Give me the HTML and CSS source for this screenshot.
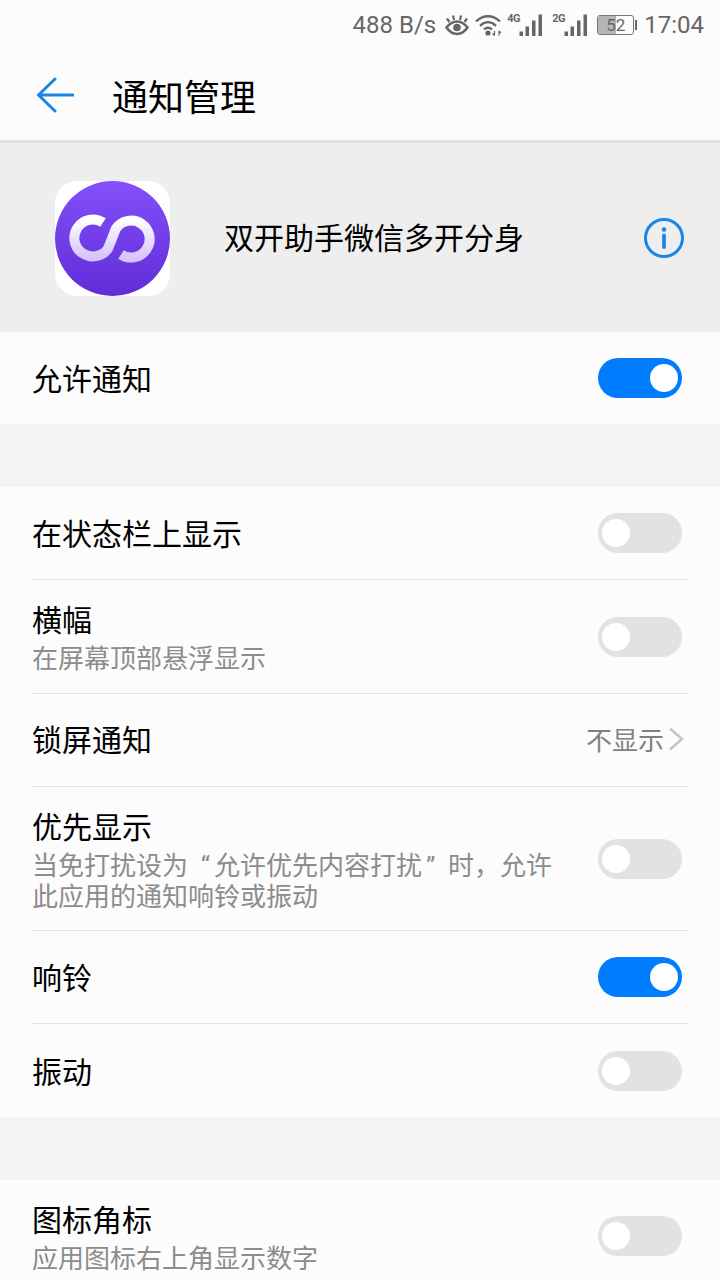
FILE: index.html
```html
<!DOCTYPE html>
<html lang="zh">
<head>
  <title>通知管理</title>
  <meta name="viewport" content="width=device-width, initial-scale=1.0" />
  <link rel="stylesheet" href="styles.css">
</head>
<body>
  <div class="statusbar">
    <span class="speed">488 B/s</span>
    <svg class="ic-eye" width="24" height="22" viewBox="0 0 24 22">
      <path d="M1.500 13.500C5 9 8.500 7.500 12 7.500s7 1.500 10.500 6C19 18.500 15.500 20 12 20s-7-1.500-10.500-6.500z" fill="none" stroke="#666" stroke-width="2.600"/>
      <circle cx="12" cy="13.500" r="3.800" fill="#666"/>
      <path d="M4.500 8L2 4.500M9 6L8 1.500M15 6L16 1.500M19.500 8L22 4.500" stroke="#666" stroke-width="2.200"/>
    </svg>
    <svg class="ic-wifi" width="28" height="22" viewBox="0 0 28 22">
      <path d="M1 7.500C8 0.500 18 0.500 25 7.500M5 11.800C10 7 16 7 21 11.800M9 15.500C11.500 13.300 14.500 13.300 17 15.500" fill="none" stroke="#666" stroke-width="2.300"/>
      <circle cx="13" cy="19" r="2.600" fill="#666"/>
      <path d="M19.500 17v4.500M19.500 21.500l-2-2M24 17v4.500M24 17l2 2" fill="none" stroke="#666" stroke-width="1.200"/>
    </svg>
    <div class="signal">
      <span class="net">4G</span>
      <svg width="24" height="22" viewBox="0 0 24 22"><path d="M0.500 17.500h3.500V22H0.500zM6.500 12.500H10V22H6.500zM13 6.500h3.500V22H13zM19.500 0.500H23V22h-3.500z" fill="#666"/></svg>
    </div>
    <div class="signal">
      <span class="net">2G</span>
      <svg width="24" height="22" viewBox="0 0 24 22"><path d="M0.500 17.500h3.500V22H0.500zM6.500 12.500H10V22H6.500zM13 6.500h3.500V22H13zM19.500 0.500H23V22h-3.500z" fill="#666"/></svg>
    </div>
    <div class="battery">
      <div class="battery-box"><div class="battery-fill"></div><span class="battery-num">52</span></div>
      <div class="battery-cap"></div>
    </div>
    <span class="time">17:04</span>
  </div>

  <div class="titlebar">
    <svg class="back" width="38" height="36" viewBox="0 0 38 36">
      <path d="M19 2L2.500 18L19 34M2.500 18H37" fill="none" stroke="#1a85e6" stroke-width="3" stroke-linecap="round" stroke-linejoin="round"/>
    </svg>
    <h1>通知管理</h1>
  </div>

  <div class="app-head">
    <div class="app-icon">
      <svg width="115" height="115" viewBox="0 0 115 115">
        <defs>
          <linearGradient id="purple" x1="0" y1="0" x2="0" y2="1">
            <stop offset="0" stop-color="#8350fb"/>
            <stop offset="1" stop-color="#5f2cd6"/>
          </linearGradient>
          <linearGradient id="ring" x1="0" y1="0" x2="0" y2="1">
            <stop offset="0" stop-color="#ffffff"/>
            <stop offset="1" stop-color="#d6c4fa"/>
          </linearGradient>
        </defs>
        <circle cx="57.500" cy="57.500" r="57.500" fill="url(#purple)"/>
        <path d="M48 41.500A18.500 18.500 0 1 0 53 67.600L61 47.400A18.500 18.500 0 1 1 66 73.500" fill="none" stroke="url(#ring)" stroke-width="10"/>
      </svg>
    </div>
    <div class="app-name">双开助手微信多开分身</div>
    <svg class="info" width="40" height="40" viewBox="0 0 40 40">
      <circle cx="20" cy="20" r="18.500" fill="none" stroke="#1a85e6" stroke-width="3"/>
      <circle cx="20" cy="11.500" r="2.300" fill="#1a85e6"/>
      <path d="M20 17.500V29" stroke="#1a85e6" stroke-width="3.800" stroke-linecap="round"/>
    </svg>
  </div>

  <div class="group">
    <div class="row row-one last">
      <div class="row-text"><div class="label">允许通知</div></div>
      <div class="toggle on"></div>
    </div>
  </div>

  <div class="group">
    <div class="row row-one">
      <div class="row-text"><div class="label">在状态栏上显示</div></div>
      <div class="toggle"></div>
    </div>
    <div class="row row-two">
      <div class="row-text">
        <div class="label">横幅</div>
        <div class="sub">在屏幕顶部悬浮显示</div>
      </div>
      <div class="toggle"></div>
    </div>
    <div class="row row-one row-lock">
      <div class="row-text"><div class="label">锁屏通知</div></div>
      <div class="value">不显示</div>
      <svg class="chevron" width="16" height="24" viewBox="0 0 16 24">
        <path d="M2 1.500L14 12L2 22.500" fill="none" stroke="#c4c4c4" stroke-width="2.400"/>
      </svg>
    </div>
    <div class="row row-priority">
      <div class="row-text">
        <div class="label">优先显示</div>
        <div class="sub">当免打扰设为<span class="quote quote-open">“</span>允许优先内容打扰<span class="quote quote-close">”</span>时，允许此应用的通知响铃或振动</div>
      </div>
      <div class="toggle"></div>
    </div>
    <div class="row row-one">
      <div class="row-text"><div class="label">响铃</div></div>
      <div class="toggle on"></div>
    </div>
    <div class="row row-one row-end last">
      <div class="row-text"><div class="label">振动</div></div>
      <div class="toggle"></div>
    </div>
  </div>

  <div class="group">
    <div class="row row-two row-badge last">
      <div class="row-text">
        <div class="label">图标角标</div>
        <div class="sub">应用图标右上角显示数字</div>
      </div>
      <div class="toggle"></div>
    </div>
  </div>
</body>
</html>
```

FILE: styles.css
```css
html, body {
  margin: 0;
  height: 1280px;
  overflow: hidden;
}
body {
  font-family: "Noto Sans CJK SC", Roboto, sans-serif;
  background-color: #f4f4f4;
  color: #000;
}
.statusbar {
  height: 50px;
  background-color: #fcfcfc;
  display: flex;
  align-items: center;
  justify-content: flex-end;
  padding-right: 16px;
  color: #666;
  font-family: Roboto, sans-serif;
  font-size: 24px;
}
.speed {
  margin-right: 9px;
}
.ic-eye {
  margin-right: 6px;
}
.ic-wifi {
  margin-right: 4px;
}
.signal {
  display: flex;
  align-items: flex-end;
  height: 22px;
  margin-right: 9px;
}
.signal .net {
  width: 13px;
  font-size: 11px;
  font-weight: 700;
  letter-spacing: -0.5px;
  line-height: 10px;
  align-self: flex-start;
}
.signal svg {
  margin-left: -1px;
}
.battery {
  display: flex;
  align-items: center;
  margin: 0 7px 0 0;
}
.battery-box {
  position: relative;
  width: 35px;
  height: 18px;
  border: 1px solid #777;
  border-radius: 3px;
}
.battery-fill {
  width: 52%;
  height: 100%;
  background-color: #b5b5b5;
}
.battery-num {
  position: absolute;
  left: 0;
  right: 0;
  top: 0;
  text-align: center;
  font-size: 17px;
  line-height: 18px;
}
.battery-cap {
  width: 2px;
  height: 10px;
  margin-left: 1px;
  background-color: #666;
}
.titlebar {
  height: 90px;
  background-color: #fcfcfc;
  border-bottom: 3px solid #e2e2e2;
  display: flex;
  align-items: center;
  padding-left: 36px;
}
.titlebar h1 {
  margin: 0 0 0 38px;
  font-size: 36px;
  font-weight: 400;
}
.app-head {
  height: 189px;
  background-color: #eeeeee;
  display: flex;
  align-items: center;
  padding: 0 36px 0 55px;
}
.app-icon {
  width: 115px;
  height: 115px;
  margin-top: 2px;
  background-color: #fff;
  border-radius: 22px;
}
.app-icon svg {
  display: block;
}
.app-name {
  flex: 1;
  margin-left: 54px;
  padding-bottom: 4px;
  font-size: 30px;
}
.group {
  background-color: #fcfcfc;
  margin-bottom: 63px;
}
.row {
  margin: 0 32px;
  display: flex;
  align-items: center;
  border-bottom: 1px solid #e4e4e4;
}
.row.last {
  border-bottom: none;
}
.row-one {
  height: 92px;
}
.row-end {
  height: 93px;
}
.row-two {
  height: 113px;
}
.row-two .row-text {
  padding-bottom: 2px;
}
.row-badge {
  height: 112px;
}
.row-priority {
  height: 143px;
}
.row-priority .row-text {
  padding-bottom: 2px;
}
.row-text {
  flex: 1;
  min-width: 0;
}
.row-one .label {
  padding-bottom: 2px;
}
.row-lock .label, .value {
  padding-bottom: 4px;
}
.label {
  font-size: 30px;
  line-height: 38px;
}
.sub {
  margin-top: 4px;
  font-size: 26px;
  line-height: 31px;
  color: #8c8c8c;
  width: 530px;
}
.quote {
  display: inline-block;
  box-sizing: border-box;
  width: 26px;
  line-height: 20px;
  font-family: Roboto, sans-serif;
}
.quote-open {
  padding-right: 4px;
  text-align: right;
}
.quote-close {
  padding-left: 4px;
  text-align: left;
}
.value {
  font-size: 26px;
  color: #808080;
}
.chevron {
  margin: 0 4px 2px 4px;
}
.toggle {
  position: relative;
  width: 84px;
  height: 40px;
  margin-right: 6px;
  flex-shrink: 0;
  border-radius: 20px;
  background-color: #e2e2e2;
}
.toggle::after {
  content: "";
  position: absolute;
  left: 4px;
  top: 6px;
  width: 28px;
  height: 28px;
  border-radius: 50%;
  background-color: #fff;
}
.toggle.on {
  background-color: #007dff;
}
.toggle.on::after {
  left: auto;
  right: 4px;
}
```
